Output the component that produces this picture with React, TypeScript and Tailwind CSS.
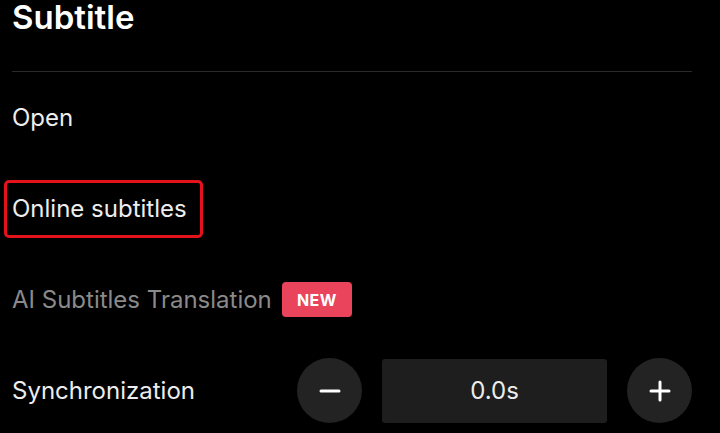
export default function App() {
  return (
    <div
      className="w-[720px] h-[433px] bg-black text-white overflow-hidden pl-3 pr-7"
      style={{ fontFamily: "Inter, 'Noto Sans', sans-serif" }}
    >
      {/* Header */}
      <div className="h-[72px] border-b border-[#2a2a2a]">
        <h1 className="text-[33px] leading-[35px] font-semibold">Subtitle</h1>
      </div>

      {/* Rows */}
      <div className="flex flex-col">
        <div className="h-[91px] flex items-center text-[24px] text-[#ededed]">Open</div>

        <div className="h-[91px] flex items-center">
          <div className="-ml-2 h-[58px] inline-flex items-center border-[3px] border-[#e3121b] rounded-[5px] pl-[5px] pr-[13px] text-[24px] text-[#ededed]">
            Online subtitles
          </div>
        </div>

        <div className="h-[91px] flex items-center gap-[10px]">
          <span className="text-[24px] text-[#8a8a8a]">AI Subtitles Translation</span>
          <span className="h-[35px] w-[70px] flex items-center justify-center rounded-[4px] bg-[#e9445c] text-[16px] font-bold tracking-wide text-white">
            NEW
          </span>
        </div>

        <div className="h-[91px] flex items-center justify-between">
          <span className="text-[24px] text-[#ededed]">Synchronization</span>
          <div className="flex items-center gap-5">
            <button className="w-[65px] h-[65px] rounded-full bg-[#232323] flex items-center justify-center">
              <svg width="26" height="26" viewBox="0 0 26 26">
                <path d="M4 13h18" stroke="#fff" strokeWidth="3" strokeLinecap="round" />
              </svg>
            </button>
            <div className="w-[225px] h-[64px] rounded-[3px] bg-[#1e1e1e] flex items-center justify-center text-[24px] text-[#ededed]">
              0.0s
            </div>
            <button className="w-[65px] h-[65px] rounded-full bg-[#232323] flex items-center justify-center">
              <svg width="26" height="26" viewBox="0 0 26 26">
                <path d="M4 13h18M13 4v18" stroke="#fff" strokeWidth="3" strokeLinecap="round" />
              </svg>
            </button>
          </div>
        </div>
      </div>
    </div>
  );
}
